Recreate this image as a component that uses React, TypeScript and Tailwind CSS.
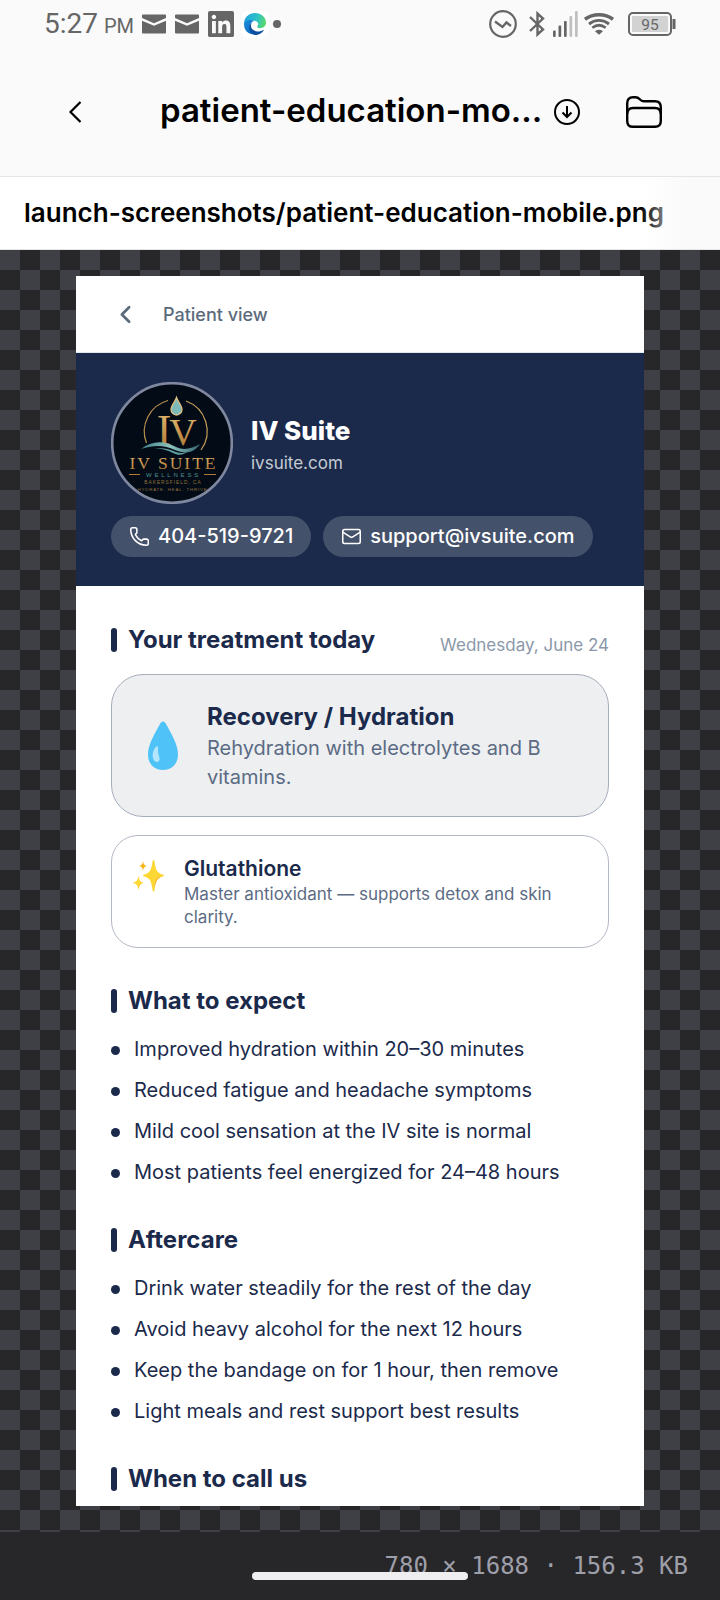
import type { ReactNode } from "react";
import { FaLinkedin } from "react-icons/fa";
import { ChevronLeft, Mail, Phone } from "lucide-react";

const expectations = [
  "Improved hydration within 20–30 minutes",
  "Reduced fatigue and headache symptoms",
  "Mild cool sensation at the IV site is normal",
  "Most patients feel energized for 24–48 hours",
];

const aftercare = [
  "Drink water steadily for the rest of the day",
  "Avoid heavy alcohol for the next 12 hours",
  "Keep the bandage on for 1 hour, then remove",
  "Light meals and rest support best results",
];

function MailGlyph() {
  return (
    <svg width="24" height="20" viewBox="0 0 24 20" fill="currentColor">
      <path d="M1 0.5h22a1 1 0 0 1 1 1v2.6l-12 5.1L0 4.1V1.5a1 1 0 0 1 1-1z" />
      <path d="M0 6.800l12 5 12-5v11.700a1 1 0 0 1-1 1H1a1 1 0 0 1-1-1z" />
    </svg>
  );
}

function EdgeLogo() {
  return (
    <svg width="28" height="28" viewBox="0 0 28 28">
      <defs>
        <linearGradient id="edgeTop" x1="3" y1="8" x2="25" y2="14" gradientUnits="userSpaceOnUse">
          <stop offset="0" stopColor="#1fa3dc" />
          <stop offset="0.55" stopColor="#2fc2c8" />
          <stop offset="1" stopColor="#5fdc62" />
        </linearGradient>
        <linearGradient id="edgeLeft" x1="3" y1="10" x2="16" y2="24" gradientUnits="userSpaceOnUse">
          <stop offset="0" stopColor="#1b8fdc" />
          <stop offset="1" stopColor="#0b63bd" />
        </linearGradient>
      </defs>
      <rect width="28" height="28" rx="8" fill="#fff" />
      <path d="M3 14C3 7 8 3 14 3c6.500 0 11 4.500 11 9.500 0 4-3 5.700-6 5.700-2.400 0-3.700-1-2.500-2.300 1.500-1.800.5-4.700-3-5.100C9 10.300 4 11 3 14z" fill="url(#edgeTop)" />
      <path d="M3 14c.6-3.600 6.500-5.200 10-3 -3.500 1-4.500 4-3.500 7 1 3.500 4.500 6 8 5.600C14 25.600 3 25 3 14z" fill="url(#edgeLeft)" />
      <path d="M11.500 12.200c-2 1.800-2.200 5 .2 7.300 2.700 2.600 7.300 2.500 11.300 .2-1 2.300-4.200 5.300-9 5.300-4-1.200-6.800-5-5.500-9 .5-1.700 1.600-3 3-3.800z" fill="#0c4f9e" />
    </svg>
  );
}

function ZigzagGlyph() {
  return (
    <svg width="28" height="28" viewBox="0 0 28 28" fill="none" stroke="currentColor">
      <circle cx="14" cy="14" r="12.800" strokeWidth="2.200" />
      <path d="M6 11.500l7.500 5.500 4-4.500 4.500 3.500" strokeWidth="2.400" />
    </svg>
  );
}

function BluetoothGlyph() {
  return (
    <svg width="16" height="26" viewBox="0 0 16 26" fill="none" stroke="currentColor" strokeWidth="2.400">
      <path d="M1 6L14 18.500 8.500 23.500V2.500L14 7.500 1 20" />
    </svg>
  );
}

function SignalGlyph() {
  return (
    <svg width="25" height="26" viewBox="0 0 25 26" fill="currentColor">
      <rect x="0" y="19.500" width="2.700" height="6.500" rx="1" />
      <rect x="5.500" y="14.500" width="2.700" height="11.500" rx="1" />
      <rect x="11" y="10" width="2.700" height="16" rx="1" />
      <rect x="16.500" y="5" width="2.700" height="21" rx="1" opacity="0.400" />
      <rect x="22" y="0" width="2.700" height="26" rx="1" opacity="0.400" />
    </svg>
  );
}

function WifiGlyph() {
  return (
    <svg width="30" height="22" viewBox="0 0 30 22" fill="none" stroke="currentColor">
      <path d="M1 6.300C9 0.300 21 0.300 29 6.300" strokeWidth="3.600" />
      <path d="M5 11C11 6.200 19 6.200 25 11" strokeWidth="2.900" />
      <path d="M8.300 14.800C12.500 11.600 17.500 11.600 21.700 14.800" strokeWidth="2.700" />
      <path d="M11 18.200a7 7 0 0 1 8 0L15 21.800z" fill="currentColor" stroke="none" />
    </svg>
  );
}

function BatteryGlyph() {
  return (
    <svg width="48" height="24" viewBox="0 0 48 24">
      <rect x="1" y="1" width="42" height="22" rx="4" fill="none" stroke="#666" strokeWidth="2" />
      <rect x="4" y="4" width="36" height="16" rx="1" fill="#d2d2d2" />
      <rect x="44.500" y="7" width="3" height="10" fill="#666" />
      <text x="22" y="17.500" textAnchor="middle" fontFamily="Roboto, sans-serif" fontSize="15.500" fill="#666">
        95
      </text>
    </svg>
  );
}

function StatusBar() {
  return (
    <div className="flex h-12 items-center justify-between pr-11 pl-11 font-['Roboto',sans-serif] text-[#666]">
      <div className="flex items-center">
        <div className="flex items-baseline gap-1.5">
          <span className="text-[28px] leading-none">5:27</span>
          <span className="text-[20px] leading-none">PM</span>
        </div>
        <div className="ml-2 flex items-center gap-[9px]">
          <MailGlyph />
          <MailGlyph />
          <FaLinkedin className="h-[30px] w-[26px]" />
        </div>
        <div className="ml-[7px] flex items-center gap-1">
          <EdgeLogo />
          <span className="size-2 rounded-full bg-[#666]" />
        </div>
      </div>
      <div className="flex items-center">
        <ZigzagGlyph />
        <div className="ml-3 flex items-center gap-2">
          <BluetoothGlyph />
          <SignalGlyph />
        </div>
        <div className="ml-1.5 flex items-center gap-[14px]">
          <WifiGlyph />
          <BatteryGlyph />
        </div>
      </div>
    </div>
  );
}

function AppBar() {
  return (
    <header className="flex h-[129px] items-center border-b border-[#e5e5e5] pr-[58px] pl-[63px]">
      <button type="button" aria-label="Back" className="shrink-0">
        <svg width="24" height="24" viewBox="0 0 24 24" fill="none" stroke="#000" strokeWidth="2.200">
          <path d="M17.500 2L7.500 12l10 10" />
        </svg>
      </button>
      <div className="ml-[73px] flex min-w-0 flex-1 items-center gap-3">
        <h1 className="pb-1 text-[33px] leading-10 font-semibold whitespace-nowrap text-black">patient-education-mo...</h1>
        <button type="button" aria-label="Download" className="shrink-0">
          <svg width="26" height="26" viewBox="0 0 26 26" fill="none" stroke="#000" strokeWidth="2">
            <circle cx="13" cy="13" r="12" />
            <path d="M13 7v11M8.500 13.500L13 18l4.500-4.500" />
          </svg>
        </button>
      </div>
      <button type="button" aria-label="Files" className="shrink-0">
        <svg width="36" height="32" viewBox="0 0 36 32" fill="none" stroke="#000" strokeWidth="2.400">
          <path d="M1.200 24V7.500C1.200 3.500 3 1.200 7 1.200h2.500c4.500 0 4 4 8 4H29c4 0 5.800 2 5.800 6V25c0 4-2 5.800-5.800 5.800H7c-4 0-5.800-2-5.800-6z" />
          <path d="M1.200 18c0-4 2-6 5.800-6h22c4 0 5.800 2 5.800 6" />
        </svg>
      </button>
    </header>
  );
}

function BrandLogo() {
  return (
    <svg viewBox="0 0 122 122" className="size-[122px] shrink-0" role="img" aria-label="IV Suite Wellness">
      <defs>
        <linearGradient id="gold" x1="0" y1="0" x2="0" y2="1">
          <stop offset="0" stopColor="#e8bd74" />
          <stop offset="1" stopColor="#a8702c" />
        </linearGradient>
        <linearGradient id="teal" x1="0" y1="0" x2="1" y2="0">
          <stop offset="0" stopColor="#3f7f86" />
          <stop offset="0.500" stopColor="#8cc4c0" />
          <stop offset="1" stopColor="#35656f" />
        </linearGradient>
        <clipPath id="badge">
          <circle cx="61" cy="61" r="58.500" />
        </clipPath>
      </defs>
      <circle cx="61" cy="61" r="59.800" fill="#030c16" stroke="#7f889f" strokeWidth="2.600" />
      <g clipPath="url(#badge)" textAnchor="middle" fontFamily="'Liberation Serif', serif">
        <path d="M57 18.500A32 32 0 0 0 35.500 61" fill="none" stroke="#b58b4b" strokeWidth="1.200" />
        <path d="M75 19A32 32 0 0 1 90 68" fill="none" stroke="#c39a58" strokeWidth="1.200" />
        <path d="M65.500 15.500c1.500 4.500 5.500 8 5.500 12a5.500 5.500 0 0 1-11 0c0-4 4-7.500 5.500-12z" fill="#7db9b8" stroke="#e0c084" strokeWidth="1.300" />
        <text x="53" y="63" fontSize="44" fill="url(#gold)">I</text>
        <text x="72" y="63" fontSize="38" fill="url(#gold)">V</text>
        <path d="M30 67c10-8 22-9 33-3 9 5 17 3 26-2-5 8-14 11-25 6-11-5-21-5-34-1z" fill="url(#teal)" />
        <path d="M42 67c9-2 16 0 23 3 5 2 9 1 12-1-4 4-9 5-15 2-6-3-12-5-20-4z" fill="#5d9ea2" />
        <text x="62.500" y="87" fontSize="17.500" letterSpacing="2" fill="url(#gold)">IV SUITE</text>
        <path d="M18 92.500h11M93 92.500h12" stroke="#b07a35" strokeWidth="1" />
        <g fontFamily="'Liberation Sans', sans-serif">
          <text x="62.500" y="95" fontSize="6" letterSpacing="2.800" fill="#4f9195">WELLNESS</text>
          <text x="62" y="102" fontSize="4.800" letterSpacing="1" fill="#94703c">BAKERSFIELD, CA</text>
          <text x="62.500" y="109" fontSize="4.400" letterSpacing="0.800" fill="#94703c">HYDRATE. HEAL. THRIVE.</text>
        </g>
      </g>
    </svg>
  );
}

function Droplet() {
  return (
    <svg width="32" height="50" viewBox="0 0 32 50" className="shrink-0" aria-hidden="true">
      <path d="M16 0.500c1.400 0 2.200 1 3 2.500 5 9.500 12 20 12 30.500C31 43 24.500 49 16 49S1 43 1 33.500C1 23 8 12.500 13 3c.8-1.500 1.600-2.500 3-2.500z" fill="#4fc3f7" />
      <path d="M9.500 25.500c2-1.200 1.500 2 1.500 5s2.500 6.500 1.300 9c-1.300 2.500-4.800 1.500-6-1.500-1.700-4.500.4-11 3.200-12.500z" fill="#b3e5fc" />
    </svg>
  );
}

function Sparkles() {
  return (
    <svg width="32" height="32" viewBox="0 0 32 32" aria-hidden="true">
      <g fill="#fdd835">
        <path d="M21.500 0c.5 0 .8.500 1 1.500 1.300 9 2.500 11.500 8.500 13 .7.200 1 .6 1 1s-.3.800-1 1c-6 1.500-7.200 4-8.500 13.500-.2 1-.5 1.500-1 1.500s-.8-.5-1-1.500c-1.300-9.500-2.500-12-8.500-13.500-.7-.2-1-.6-1-1s.3-.8 1-1c6-1.500 7.200-4 8.500-13 .2-1 .5-1.500 1-1.500z" />
        <path d="M6.500 15.500c.9 5 1.500 6.300 5.500 7.300-4 1-4.600 2.300-5.500 7.500-.9-5.200-1.500-6.500-6.500-7.500 5-1 5.600-2.300 6.500-7.300z" />
      </g>
      <path d="M11 1c.7 3.500 1.200 4.300 4.200 5-3 .7-3.500 1.500-4.200 5-.7-3.500-1.200-4.300-4.200-5 3-.7 3.500-1.500 4.200-5z" fill="#f9b41c" />
      <path d="M31.500 15.500c-6 2-7.500 5-9.500 13 1-8.500 2.500-11.500 9.500-13zM12 22.800c-3.500.7-4.500 2-5.200 6 0-3.500 1-5.500 5.200-6z" fill="#f4a62a" />
    </svg>
  );
}

function SectionTitle({ children }: { children: ReactNode }) {
  return (
    <h2 className="flex items-center gap-[11px] text-[24px] leading-[35px] font-bold">
      <span className="h-6 w-1.5 rounded-full bg-[#1b2a4b]" />
      {children}
    </h2>
  );
}

function BulletList({ items }: { items: string[] }) {
  return (
    <ul className="mt-[17px] flex flex-col gap-3 text-[20px] leading-[29px]">
      {items.map((item) => (
        <li key={item} className="flex items-center gap-[14px]">
          <span className="mt-0.5 size-[9px] shrink-0 rounded-full bg-[#1b2a4b]" />
          {item}
        </li>
      ))}
    </ul>
  );
}

function PatientPage() {
  return (
    <article className="bg-white text-[#1b2a4b]">
      <nav className="flex h-[77px] items-center gap-[23px] border-b border-[#e2e8f0] pl-[35px] text-[#5b6b7c]">
        <button type="button" aria-label="Back to patients">
          <ChevronLeft size={29} strokeWidth={2.25} />
        </button>
        <span className="text-[18px] font-medium">Patient view</span>
      </nav>

      <header className="flex flex-col gap-3 bg-[#1b2a4b] px-[35px] py-[29px] text-white">
        <div className="flex items-center gap-[18px]">
          <BrandLogo />
          <div className="pt-1">
            <p className="text-[26px] leading-9 font-extrabold">IV Suite</p>
            <p className="text-[17px] leading-[29px] text-[#c6cad3]">ivsuite.com</p>
          </div>
        </div>
        <div className="flex gap-3 text-[20px] leading-[29px] font-medium">
          <a href="tel:4045199721" className="flex items-center gap-2 rounded-full bg-[#44516a] px-[18px] py-1.5">
            <Phone size={21} strokeWidth={1.75} />
            404-519-9721
          </a>
          <a href="mailto:support@ivsuite.com" className="flex items-center gap-2 rounded-full bg-[#44516a] px-[18px] py-1.5">
            <Mail size={21} strokeWidth={1.75} />
            support@ivsuite.com
          </a>
        </div>
      </header>

      <div className="flex flex-col gap-[35px] px-[35px] pt-9 pb-[10px]">
        <section>
          <div className="flex items-end justify-between">
            <SectionTitle>Your treatment today</SectionTitle>
            <span className="text-[17px] leading-6 text-[#8b98ab]">Wednesday, June 24</span>
          </div>
          <div className="mt-[17px] flex items-center gap-7 rounded-[32px] border border-[#a5adbb] bg-[#edeff1] py-[24px] pr-9 pl-[35px]">
            <Droplet />
            <div>
              <h3 className="text-[24px] leading-[35px] font-bold">Recovery / Hydration</h3>
              <p className="text-[20px] leading-[29px] text-[#5b6b84]">Rehydration with electrolytes and B vitamins.</p>
            </div>
          </div>
          <div className="mt-[18px] flex items-start gap-5 rounded-[27px] border border-[#b3b9c5] py-[18px] pr-6 pl-5">
            <span className="mt-1.5 shrink-0">
              <Sparkles />
            </span>
            <div>
              <h3 className="text-[21px] leading-[29px] font-semibold">Glutathione</h3>
              <p className="text-[17px] leading-[23px] text-[#5b6b84]">Master antioxidant — supports detox and skin clarity.</p>
            </div>
          </div>
        </section>

        <section>
          <SectionTitle>What to expect</SectionTitle>
          <BulletList items={expectations} />
        </section>

        <section>
          <SectionTitle>Aftercare</SectionTitle>
          <BulletList items={aftercare} />
        </section>

        <section>
          <SectionTitle>When to call us</SectionTitle>
        </section>
      </div>
    </article>
  );
}

export default function App() {
  return (
    <div className="relative flex min-h-screen flex-col bg-[#fafafa] font-['Inter',sans-serif]">
      <StatusBar />
      <AppBar />
      <div className="relative border-b border-[#e5e5e5] bg-white px-6 py-4">
        <p className="truncate text-[26px] leading-10 font-semibold text-black">launch-screenshots/patient-education-mobile.png</p>
        <div className="absolute inset-y-0 right-0 w-20 bg-linear-to-r from-transparent to-[#fafafa] to-60%" />
      </div>

      <main className="flex-1 bg-[#27272a] bg-[conic-gradient(#27272a_25%,#3f3f46_0_50%,#27272a_0_75%,#3f3f46_0)] bg-[length:40px_40px] px-[76px] py-[26px]">
        <PatientPage />
      </main>

      <footer className="bg-[#27272a] px-8 py-[17px] text-right font-['DejaVu_Sans_Mono',monospace] text-[24px] leading-[34px] text-[#9f9fa9]">
        780 × 1688 · 156.3 KB
      </footer>
      <div className="absolute bottom-5 left-1/2 h-2 w-[216px] -translate-x-1/2 rounded-full bg-[#eee]" />
    </div>
  );
}
